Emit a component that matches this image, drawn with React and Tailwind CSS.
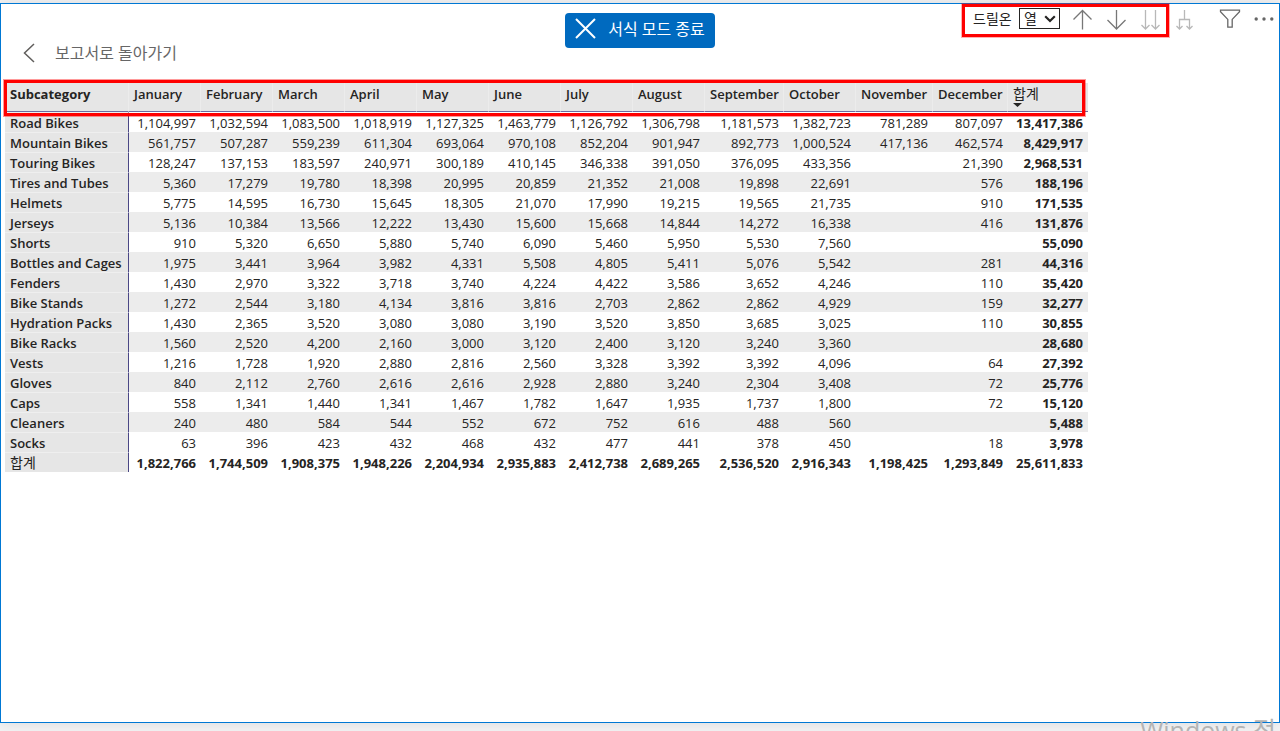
import React, { useState } from 'react';

const months = [
    'January', 'February', 'March', 'April', 'May', 'June', 'July',
    'August', 'September', 'October', 'November', 'December',
];

const rows = [
    { name: 'Road Bikes', values: ['1,104,997', '1,032,594', '1,083,500', '1,018,919', '1,127,325', '1,463,779', '1,126,792', '1,306,798', '1,181,573', '1,382,723', '781,289', '807,097'], total: '13,417,386' },
    { name: 'Mountain Bikes', values: ['561,757', '507,287', '559,239', '611,304', '693,064', '970,108', '852,204', '901,947', '892,773', '1,000,524', '417,136', '462,574'], total: '8,429,917' },
    { name: 'Touring Bikes', values: ['128,247', '137,153', '183,597', '240,971', '300,189', '410,145', '346,338', '391,050', '376,095', '433,356', '', '21,390'], total: '2,968,531' },
    { name: 'Tires and Tubes', values: ['5,360', '17,279', '19,780', '18,398', '20,995', '20,859', '21,352', '21,008', '19,898', '22,691', '', '576'], total: '188,196' },
    { name: 'Helmets', values: ['5,775', '14,595', '16,730', '15,645', '18,305', '21,070', '17,990', '19,215', '19,565', '21,735', '', '910'], total: '171,535' },
    { name: 'Jerseys', values: ['5,136', '10,384', '13,566', '12,222', '13,430', '15,600', '15,668', '14,844', '14,272', '16,338', '', '416'], total: '131,876' },
    { name: 'Shorts', values: ['910', '5,320', '6,650', '5,880', '5,740', '6,090', '5,460', '5,950', '5,530', '7,560', '', ''], total: '55,090' },
    { name: 'Bottles and Cages', values: ['1,975', '3,441', '3,964', '3,982', '4,331', '5,508', '4,805', '5,411', '5,076', '5,542', '', '281'], total: '44,316' },
    { name: 'Fenders', values: ['1,430', '2,970', '3,322', '3,718', '3,740', '4,224', '4,422', '3,586', '3,652', '4,246', '', '110'], total: '35,420' },
    { name: 'Bike Stands', values: ['1,272', '2,544', '3,180', '4,134', '3,816', '3,816', '2,703', '2,862', '2,862', '4,929', '', '159'], total: '32,277' },
    { name: 'Hydration Packs', values: ['1,430', '2,365', '3,520', '3,080', '3,080', '3,190', '3,520', '3,850', '3,685', '3,025', '', '110'], total: '30,855' },
    { name: 'Bike Racks', values: ['1,560', '2,520', '4,200', '2,160', '3,000', '3,120', '2,400', '3,120', '3,240', '3,360', '', ''], total: '28,680' },
    { name: 'Vests', values: ['1,216', '1,728', '1,920', '2,880', '2,816', '2,560', '3,328', '3,392', '3,392', '4,096', '', '64'], total: '27,392' },
    { name: 'Gloves', values: ['840', '2,112', '2,760', '2,616', '2,616', '2,928', '2,880', '3,240', '2,304', '3,408', '', '72'], total: '25,776' },
    { name: 'Caps', values: ['558', '1,341', '1,440', '1,341', '1,467', '1,782', '1,647', '1,935', '1,737', '1,800', '', '72'], total: '15,120' },
    { name: 'Cleaners', values: ['240', '480', '584', '544', '552', '672', '752', '616', '488', '560', '', ''], total: '5,488' },
    { name: 'Socks', values: ['63', '396', '423', '432', '468', '432', '477', '441', '378', '450', '', '18'], total: '3,978' },
];

const totals = [
    '1,822,766', '1,744,509', '1,908,375', '1,948,226', '2,204,934', '2,935,883', '2,412,738',
    '2,689,265', '2,536,520', '2,916,343', '1,198,425', '1,293,849', '25,611,833',
];

function IconButton({ label, className, children }) {
    return (
        <button type="button" aria-label={label} className={`flex items-center justify-center ${className}`}>
            <svg width="22" height="22" viewBox="0 0 22 22" fill="none" stroke="currentColor" aria-hidden="true">
                {children}
            </svg>
        </button>
    );
}

function Toolbar() {
    const [axis, setAxis] = useState('column');

    return (
        <div className="flex items-start justify-end pr-1">
            {/* Drill controls */}
            <div className="flex h-[33px] items-center border-3 border-[#ff0000] pb-1 pl-2 shadow-[0_0_0_1px_rgba(255,0,0,0.3)]">
                <label htmlFor="drill-on" className="w-[46px] whitespace-nowrap text-[14px] leading-5 text-[#252423]">
                    드릴온
                </label>
                <div className="relative mr-3">
                    <select
                        id="drill-on"
                        value={axis}
                        onChange={(e) => setAxis(e.target.value)}
                        className="block h-[21px] w-[41px] appearance-none border border-[#252423] bg-white pl-1 text-[14px] leading-[18px] text-[#252423]"
                    >
                        <option value="column">열</option>
                        <option value="row">행</option>
                    </select>
                    <svg
                        width="12" height="8" viewBox="0 0 12 8" fill="none" stroke="#252423" strokeWidth="2.2"
                        className="pointer-events-none absolute right-1 top-[7px]" aria-hidden="true"
                    >
                        <path d="M1.2 1.2 6 6l4.8-4.8" />
                    </svg>
                </div>
                <IconButton label="드릴업" className="mr-3 text-[#777777]">
                    <path strokeWidth="1.3" d="M10.5 21.5V2.5M1.5 11.5l9-9 9 9" />
                </IconButton>
                <IconButton label="드릴다운" className="mr-3 text-[#777777]">
                    <path strokeWidth="1.3" d="M10.5 2v19M1.5 12l9 9 9-9" />
                </IconButton>
                <IconButton label="다음 수준으로 이동" className="mr-1 text-[#b8b8b8]">
                    <path strokeWidth="1.3" d="M5.5 2v19M1.5 17l4 4 4-4M15.5 2v19M11.5 17l4 4 4-4" />
                </IconButton>
            </div>
            <div className="flex h-[33px] items-center pb-1 pl-1">
                <IconButton label="한 수준 아래로 확장" className="mr-6 text-[#b8b8b8]">
                    <path strokeWidth="1.3" d="M11.5 2v9.5M6.5 21v-9.5h10V21M3.5 18l3 3 3-3M13.5 18l3 3 3-3" />
                </IconButton>
                <IconButton label="필터" className="mr-3 text-[#666666]">
                    <path strokeWidth="1.3" d="M1.5 2.2h19v1.6l-7.3 7.6v7.8H8.8v-7.8L1.5 3.8z" />
                </IconButton>
                <IconButton label="추가 옵션" className="text-[#666666]">
                    <g fill="currentColor" stroke="none">
                        <circle cx="3.2" cy="11" r="1.7" />
                        <circle cx="11" cy="11" r="1.7" />
                        <circle cx="18.8" cy="11" r="1.7" />
                    </g>
                </IconButton>
            </div>
        </div>
    );
}

function Matrix() {
    return (
        <div className="relative w-[1083px]">
            <table className="w-full table-fixed border-separate border-spacing-0 text-[13px] leading-[18px] text-[#252423]">
                <colgroup>
                    <col className="w-[124px]" />
                    {months.slice(0, 8).map((m) => (
                        <col key={m} className="w-[72px]" />
                    ))}
                    <col className="w-[79px]" />
                    <col className="w-[72px]" />
                    <col className="w-[77px]" />
                    <col className="w-[75px]" />
                    <col className="w-[80px]" />
                </colgroup>
                <thead>
                    <tr className="h-[29px] bg-[#e6e6e6] text-left align-top">
                        <th scope="col" className="border-b border-r border-b-[#6b6c9f] border-r-[#ececec] pl-[5px] pt-[2px] font-bold">
                            Subcategory
                        </th>
                        {months.map((m) => (
                            <th key={m} scope="col" className="border-b border-r border-b-[#6b6c9f] border-r-[#ececec] pl-[5px] pt-[2px] font-semibold">
                                {m}
                            </th>
                        ))}
                        <th scope="col" aria-sort="descending" className="border-b border-b-[#6b6c9f] pl-[5px] pt-[2px] text-[14px] font-normal">
                            합계
                            <svg width="9" height="4" viewBox="0 0 9 4" className="block" aria-hidden="true">
                                <path d="M0 0h9L4.5 4z" fill="#252423" />
                            </svg>
                        </th>
                    </tr>
                </thead>
                <tbody>
                    {rows.map((row) => (
                        <tr key={row.name} className="h-5 text-right even:bg-[#ececec]">
                            <th scope="row" className="h-5 whitespace-nowrap border-t border-r border-t-[#efefef] border-r-[#4a4785] bg-[#e6e6e6] pl-[5px] pt-px text-left font-semibold">
                                {row.name}
                            </th>
                            {row.values.map((value, i) => (
                                <td key={months[i]} className="pr-[5px] pt-[2px]">{value}</td>
                            ))}
                            <td className="pr-[5px] pt-[2px] font-bold">{row.total}</td>
                        </tr>
                    ))}
                </tbody>
                <tfoot>
                    <tr className="h-5 text-right font-bold">
                        <th scope="row" className="border-t border-r border-t-[#efefef] border-r-[#4a4785] bg-[#e6e6e6] pl-[5px] pt-px text-left text-[14px] font-normal">
                            합계
                        </th>
                        {totals.map((value) => (
                            <td key={value} className="pr-[5px] pt-[2px]">{value}</td>
                        ))}
                    </tr>
                </tfoot>
            </table>
            {/* Header highlight */}
            <div className="pointer-events-none absolute -left-px -top-[3px] right-[3px] h-9 border-3 border-[#ff0000] shadow-[0_0_0_1px_rgba(255,0,0,0.4)]" />
        </div>
    );
}

export default function App() {
    return (
        <div className="relative flex min-h-screen flex-col overflow-hidden bg-[#f3f3f4] pb-2 pt-[3px] font-['Open_Sans','Noto_Sans_CJK_KR',sans-serif]">
            <main className="flex-1 border border-[#0078d4] bg-white shadow-[0_0_14px_rgba(0,0,0,0.1)]">
                <header className="grid h-[61px] grid-cols-[1fr_auto_1fr]">
                    <a href="#report" className="flex items-center gap-5 self-end pl-[22px] text-[16px] leading-6 text-[#666666]">
                        <svg width="12" height="20" viewBox="0 0 12 20" fill="none" stroke="#605e5c" strokeWidth="1.5" aria-hidden="true">
                            <path d="M11 1 1.5 10l9.5 9" />
                        </svg>
                        보고서로 돌아가기
                    </a>
                    <div className="pt-[9px]">
                        <button type="button" className="flex h-[35px] items-center gap-3 rounded bg-[#006abf] pb-1 pl-[10px] pr-[10px] text-[16px] leading-6 text-white">
                            <svg width="21" height="21" viewBox="0 0 21 21" fill="none" stroke="currentColor" strokeWidth="2" aria-hidden="true">
                                <path d="m1 1 19 19M20 1 1 20" />
                            </svg>
                            서식 모드 종료
                        </button>
                    </div>
                    <Toolbar />
                </header>
                <section className="px-1 pt-[18px]">
                    <Matrix />
                </section>
            </main>
            {/* Activation watermark, cut off by the window's lower edge */}
            <div className="pointer-events-none absolute bottom-0 right-1 h-[17px] overflow-hidden whitespace-nowrap text-[25px] leading-8 text-[#b4b4b4]">
                Windows 정
            </div>
        </div>
    );
}
